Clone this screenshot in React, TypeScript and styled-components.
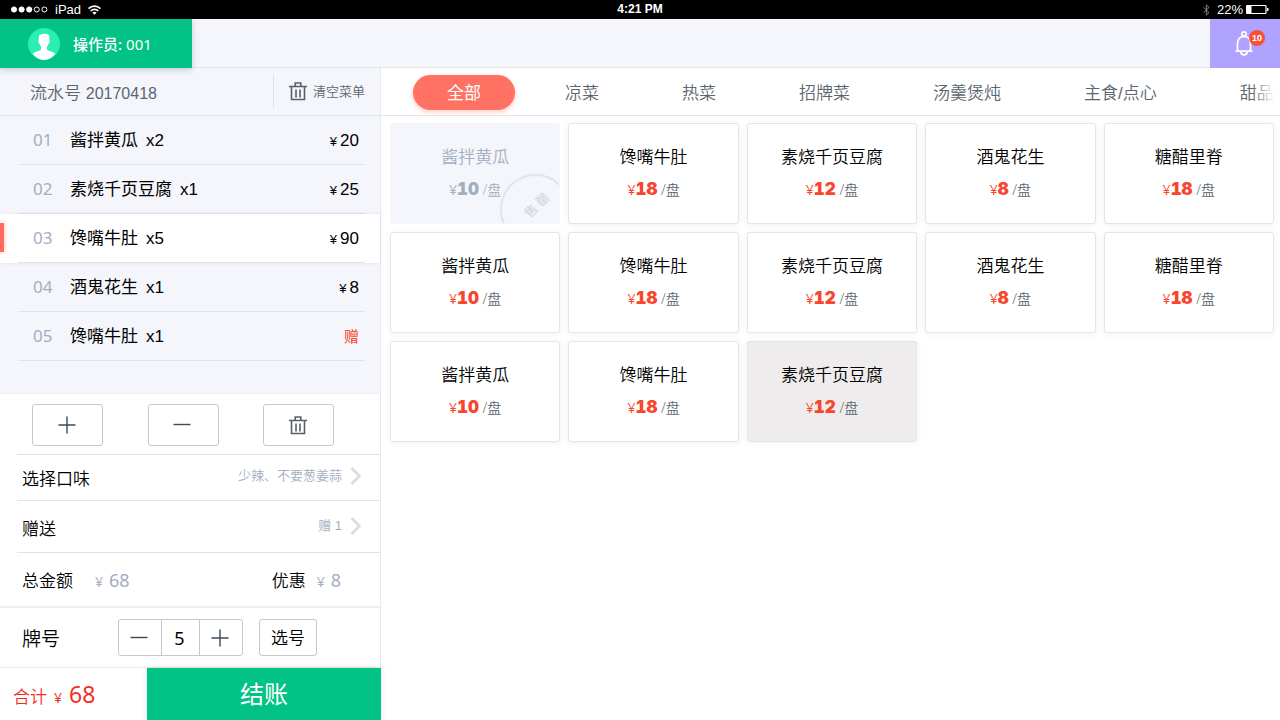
import React, { useState } from 'react';
import styled, { createGlobalStyle } from 'styled-components';

const GlobalStyle = createGlobalStyle`
  *, *::before, *::after { box-sizing: border-box; }
  body {
    margin: 0;
    background: #fff;
    color: #000;
    font-family: 'Liberation Sans', 'Noto Sans CJK SC', sans-serif;
    font-size: 17px;
    font-weight: 350;
    line-height: 24px;
  }
  button, input { font: inherit; color: inherit; }
  button { padding: 0; border: 0; background: none; cursor: pointer; }
  ul { margin: 0; padding: 0; list-style: none; }
`;

const Screen = styled.div`
  display: flex;
  flex-direction: column;
  min-height: 100vh;
`;

/* ---- status bar ---- */

const StatusBar = styled.div`
  display: grid;
  grid-template-columns: 1fr auto 1fr;
  align-items: center;
  height: 19px;
  padding: 0 11px;
  background: #000;
  color: #fff;
  font-size: 13px;
  font-weight: 400;
  line-height: 19px;
`;

const StatusGroup = styled.div<{ $end?: boolean }>`
  display: flex;
  align-items: center;
  gap: 7px;
  justify-content: ${(p) => (p.$end ? 'flex-end' : 'flex-start')};
`;

const Battery = styled.span`
  display: flex;
  align-items: center;
  gap: 3px;
`;

const Clock = styled.strong`
  font-size: 12px;
  font-weight: 700;
`;

/* ---- top bar ---- */

const TopBar = styled.header`
  display: flex;
  justify-content: space-between;
  height: 49px;
  background: #f4f6fb;
  border-bottom: 1px solid #e3e7ea;
`;

const Operator = styled.div`
  position: relative;
  display: flex;
  align-items: center;
  gap: 13px;
  width: 192px;
  height: 49px;
  padding-left: 28px;
  padding-top: 1px;
  background: #02c385;
  box-shadow: 0 2px 6px rgba(60, 70, 90, 0.25);
  color: #fff;
  font-family: 'Noto Sans', 'Noto Sans CJK SC', sans-serif;
  font-size: 15px;
  font-weight: 400;

  b { font-weight: 500; margin-right: 4px; }
`;

const Notice = styled.button`
  display: flex;
  align-items: center;
  justify-content: center;
  width: 70px;
  height: 49px;
  padding-right: 2px;
  background: #b0a2ff;
`;

const BellBox = styled.span`
  position: relative;
  display: flex;
`;

const Count = styled.span`
  position: absolute;
  top: -1px;
  right: -12px;
  width: 16px;
  height: 16px;
  border-radius: 8px;
  background: #f9503a;
  color: #fff;
  font-size: 9px;
  font-weight: 700;
  line-height: 16px;
  text-align: center;
`;

/* ---- body ---- */

const Body = styled.div`
  display: flex;
  flex: 1;
`;

const Order = styled.aside`
  display: flex;
  flex-direction: column;
  flex: none;
  width: 381px;
  border-right: 1px solid #e6e9ee;
`;

const OrderHead = styled.div`
  display: flex;
  align-items: center;
  justify-content: space-between;
  height: 48px;
  padding: 0 15px 0 30px;
  background: #f4f6fb;
  border-bottom: 1px solid #e1e5ea;
  color: #5b6670;
`;

const Serial = styled.span`
  padding-top: 4px;

  span { font-size: 16px; }
`;

const ClearButton = styled.button`
  display: flex;
  align-items: center;
  gap: 6px;
  height: 35px;
  padding-left: 15px;
  border-left: 1px solid #e1e5ea;
  font-size: 13px;
`;

const OrderList = styled.ul`
  flex: 1;
  padding-bottom: 32px;
  background: #f4f6fb;
  border-bottom: 1px solid #eceff4;
`;

const OrderRow = styled.li<{ $active?: boolean }>`
  position: relative;
  padding: 0 15px 0 18px;
  background: ${(p) => (p.$active ? '#fff' : 'transparent')};
  box-shadow: ${(p) => (p.$active ? '0 0 4px rgba(90, 100, 130, 0.12)' : 'none')};

  &::before {
    content: '';
    display: ${(p) => (p.$active ? 'block' : 'none')};
    position: absolute;
    left: 0;
    top: 9px;
    width: 4px;
    height: 29px;
    background: #ff6a5c;
    box-shadow: 0 0 5px rgba(255, 106, 92, 0.5);
  }
`;

const OrderLine = styled.div`
  display: flex;
  align-items: center;
  height: 49px;
  padding: 2px 6px 0 15px;
  border-bottom: 1px solid #e0e4ea;
  font-weight: 400;
`;

const Index = styled.span`
  width: 37px;
  padding-bottom: 2px;
  color: #a3aec0;
  font-family: 'Noto Sans', sans-serif;
`;

const Dish = styled.span`
  display: flex;
  flex: 1;
  gap: 8px;
`;

const Price = styled.span`
  display: flex;
  align-items: baseline;
  gap: 3px;

  small { font-size: 13px; }
`;

const Gift = styled.span`
  color: #f9452d;
  font-size: 15px;
`;

const Actions = styled.div`
  display: flex;
  justify-content: space-between;
  margin-left: 17px;
  padding: 10px 46px 8px 15px;
  border-bottom: 1px solid #dde4ec;
`;

const ActionButton = styled.button`
  display: flex;
  align-items: center;
  justify-content: center;
  width: 71px;
  height: 42px;
  padding-right: 2px;
  border: 1px solid #c6c8ca;
  border-radius: 3px;
`;

const OptionRow = styled.button<{ $tall?: boolean }>`
  display: flex;
  align-items: center;
  justify-content: space-between;
  height: ${(p) => (p.$tall ? '52px' : '46px')};
  margin-left: 17px;
  padding: ${(p) => (p.$tall ? '3px 19px 0 5px' : '0 19px 0 5px')};
  border-bottom: 1px solid #dde4ec;
`;

const OptionName = styled.span`
  padding-top: 4px;
`;

const OptionValue = styled.span`
  display: flex;
  align-items: center;
  gap: 8px;
  padding-bottom: 4px;
  color: #a3aec0;
  font-size: 13px;
`;

const Totals = styled.div`
  display: flex;
  align-items: center;
  justify-content: space-between;
  height: 55px;
  padding: 2px 39px 0 22px;
  border-bottom: 2px solid #eceff2;
`;

const Amount = styled.span<{ $wide?: boolean }>`
  display: flex;
  align-items: baseline;
  gap: ${(p) => (p.$wide ? '22px' : '11px')};
`;

const Figure = styled.span`
  color: #a3aec0;
  font-family: 'Noto Sans', sans-serif;
  font-size: 18px;
  font-weight: 400;

  small { margin-right: 6px; font-size: 14px; }
`;

const PlateRow = styled.div`
  display: flex;
  align-items: center;
  height: 60px;
  padding-left: 22px;
  border-bottom: 1px solid #e8ebee;
`;

const PlateLabel = styled.label`
  width: 96px;
  padding-top: 4px;
  font-size: 19px;
`;

const Stepper = styled.div`
  display: flex;
  height: 37px;
  margin-right: 16px;
  border: 1px solid #c6c8ca;
  border-radius: 3px;
`;

const StepButton = styled.button`
  display: flex;
  align-items: center;
  justify-content: center;
  width: 42px;
  padding-right: 2px;
`;

const StepInput = styled.input`
  width: 39px;
  padding: 0 2px 0 0;
  border: solid #c6c8ca;
  border-width: 0 1px;
  background: none;
  font-family: 'Noto Sans', sans-serif;
  font-size: 18px;
  font-weight: 400;
  text-align: center;
  outline: 0;
`;

const PickButton = styled.button`
  width: 58px;
  height: 37px;
  padding-top: 2px;
  border: 1px solid #c6c8ca;
  border-radius: 3px;
`;

const Footer = styled.div`
  display: flex;
  height: 53px;
`;

const Due = styled.div`
  flex: 1;
  padding: 14px 0 0 13px;
  color: #f0301f;

  small { margin: 0 7px; font-family: 'Noto Sans', sans-serif; font-size: 14px; font-weight: 400; }
  span { font-family: 'Noto Sans', sans-serif; font-size: 23px; font-weight: 400; }
`;

const Checkout = styled.button`
  width: 234px;
  margin-right: -1px;
  background: #02c385;
  box-shadow: 0 0 6px rgba(40, 60, 80, 0.15);
  color: #fff;
  font-size: 24px;
  font-weight: 400;
`;

/* ---- menu ---- */

const Menu = styled.main`
  flex: 1;
  min-width: 0;
`;

const Tabs = styled.nav`
  display: flex;
  align-items: center;
  gap: 17px;
  height: 48px;
  padding-top: 2px;
  padding-left: 32px;
  overflow: hidden;
  border-bottom: 1px solid #e1e5ea;
`;

const TabsFade = styled.div`
  position: relative;

  &::after {
    content: '';
    position: absolute;
    top: 0;
    right: 0;
    width: 28px;
    height: 46px;
    background: linear-gradient(to right, rgba(255, 255, 255, 0), #fff 80%);
    pointer-events: none;
  }
`;

const Tab = styled.button<{ $active?: boolean }>`
  flex: none;
  height: 35px;
  padding: ${(p) => (p.$active ? '2px 34px 0' : '2px 33px 0')};
  border-radius: 18px;
  background: ${(p) => (p.$active ? '#ff7263' : 'transparent')};
  box-shadow: ${(p) => (p.$active ? '0 2px 5px rgba(255, 114, 99, 0.4)' : 'none')};
  color: ${(p) => (p.$active ? '#fff' : '#5b6670')};
  font-weight: ${(p) => (p.$active ? 400 : 350)};
`;

const Grid = styled.div`
  display: grid;
  grid-template-columns: repeat(5, 1fr);
  gap: 8px;
  padding: 7px 6px 8px 9px;
`;

type CardState = 'normal' | 'pressed' | 'soldout';

const Card = styled.button<{ $state: CardState }>`
  position: relative;
  display: flex;
  flex-direction: column;
  align-items: center;
  justify-content: center;
  gap: 7px;
  height: 101px;
  padding-top: 1px;
  overflow: hidden;
  border: 1px solid ${(p) => (p.$state === 'soldout' ? '#f4f6fb' : '#e2e6ea')};
  border-radius: 3px;
  background: ${(p) =>
    p.$state === 'soldout' ? '#f4f6fb' : p.$state === 'pressed' ? '#eeecec' : '#fff'};
  box-shadow: ${(p) => (p.$state === 'soldout' ? 'none' : '0 1px 6px rgba(60, 60, 60, 0.07)')};
  color: ${(p) => (p.$state === 'soldout' ? '#a3aec0' : '#000')};
`;

const CardPrice = styled.span<{ $muted: boolean }>`
  color: ${(p) => (p.$muted ? '#a3aec0' : '#f9452d')};
  font-family: 'Open Sans', 'Noto Sans CJK SC', sans-serif;
  font-size: 14px;

  small { font-size: 14px; font-weight: 400; }
  b {
    font-family: Inter, sans-serif;
    font-size: 17px;
    font-weight: 900;
    font-variant-numeric: tabular-nums;
  }
  span { color: ${(p) => (p.$muted ? '#a3aec0' : '#5b6670')}; }
`;

const Stamp = styled.span`
  position: absolute;
  right: -12px;
  bottom: -22px;
  display: flex;
  align-items: center;
  justify-content: center;
  gap: 3px;
  width: 71px;
  height: 71px;
  padding: 0 0 4px 8px;
  border: 2px solid #e0e4e9;
  border-radius: 50%;
  color: #cdd3db;
  font-size: 13px;
  line-height: 16px;
  transform: rotate(-45deg);
`;

/* ---- icons ---- */

const Trash = () => (
  <svg width="18" height="19" viewBox="0 0 18 19" fill="none" stroke="#56616c" strokeWidth="1.6">
    <path d="M0 4.5h18M6.200 4V1h5.600v3M2.500 4.5v13h13v-13M7 7.500v8M11 7.500v8" />
  </svg>
);

const Plus = () => (
  <svg width="18" height="18" viewBox="0 0 18 18" stroke="#3c4a58" strokeWidth="1.4">
    <path d="M0.5 9h17M9 0.5v17" />
  </svg>
);

const Minus = () => (
  <svg width="18" height="18" viewBox="0 0 18 18" stroke="#3c4a58" strokeWidth="1.4">
    <path d="M0.5 8.5h17" />
  </svg>
);

const Chevron = () => (
  <svg width="11" height="18" viewBox="0 0 11 18" fill="none" stroke="#d9dbde" strokeWidth="2.6">
    <path d="M1.5 1l8 8-8 8" />
  </svg>
);

const Avatar = () => (
  <svg width="32" height="32" viewBox="0 0 32 32">
    <circle cx="16" cy="16" r="16" fill="#2aeeb2" />
    <path
      d="M10.900 8C11.200 6.600 12.400 6.300 13 6.400c1.200-.9 6.200-1 7.500.3 1.100.9 1.200 3 .8 5.500.8.2.6 1.800-.6 3.200-.4 1.400-.9 2.200-1.700 3v3c1 1.600 6 1.900 8.300 4.300A16 16 0 0 1 16 32a16 16 0 0 1-11.300-6.300c2.300-2.400 7.300-2.700 8.300-4.300v-3c-.8-.8-1.300-1.700-1.600-3-1.200-1.400-1.400-3-.6-3.200-.3-1.600-.2-3 .1-4.200z"
      fill="#fff"
    />
  </svg>
);

const Bell = () => (
  <svg width="18" height="25" viewBox="0 0 18 25" fill="none" stroke="#fff" strokeWidth="1.7">
    <circle cx="9" cy="3" r="2.100" />
    <path d="M0.500 20.200h17M2.500 20v-7.500C2.500 8 5 5.500 9 5.500s6.500 2.500 6.500 7V20M5.500 20.500c.4 2.300 1.700 3.300 3.500 3.300s3.100-1 3.500-3.300" />
  </svg>
);

const Signal = () => (
  <svg width="37" height="7" viewBox="0 0 37 7" fill="#fff" stroke="#fff">
    {[3, 10.6, 18.2].map((x) => (
      <circle key={x} cx={x} cy="3.500" r="2.600" />
    ))}
    {[25.800, 33.400].map((x) => (
      <circle key={x} cx={x} cy="3.500" r="2.500" fill="none" />
    ))}
  </svg>
);

const Wifi = () => (
  <svg width="13" height="10" viewBox="0 0 13 10" fill="none" stroke="#fff" strokeWidth="1.700">
    <path d="M0.600 3.600a8.400 8.400 0 0 1 11.800 0M2.700 6a5.400 5.400 0 0 1 7.600 0" />
    <path d="M6.500 9.800L4.400 7.700a3 3 0 0 1 4.200 0z" fill="#fff" stroke="none" />
  </svg>
);

const Bluetooth = () => (
  <svg width="7" height="12" viewBox="0 0 7 12" fill="none" stroke="#808080">
    <path d="M0.500 3.200l5.500 5.400-2.600 2.500V0.900L6 3.400 0.500 8.800" />
  </svg>
);

const BatteryIcon = () => (
  <svg width="23" height="9" viewBox="0 0 23 9" fill="none" stroke="#fff">
    <rect x="0.500" y="0.500" width="19.500" height="8" rx="1" strokeWidth="1.200" />
    <path d="M1 1h4.500v7H1z" fill="#fff" stroke="none" />
    <path d="M21 3h1.500v3H21z" fill="#fff" stroke="none" />
  </svg>
);

/* ---- data ---- */

const orderItems = [
  { name: '酱拌黄瓜', qty: 2, price: 20 },
  { name: '素烧千页豆腐', qty: 1, price: 25 },
  { name: '馋嘴牛肚', qty: 5, price: 90, active: true },
  { name: '酒鬼花生', qty: 1, price: 8 },
  { name: '馋嘴牛肚', qty: 1, price: null },
];

const tabs = ['全部', '凉菜', '热菜', '招牌菜', '汤羹煲炖', '主食/点心', '甜品'];

const dishes: { name: string; price: number }[] = [
  { name: '酱拌黄瓜', price: 10 },
  { name: '馋嘴牛肚', price: 18 },
  { name: '素烧千页豆腐', price: 12 },
  { name: '酒鬼花生', price: 8 },
  { name: '糖醋里脊', price: 18 },
];

const cards = [...dishes, ...dishes, ...dishes.slice(0, 3)].map((dish, i) => ({
  ...dish,
  state: (i === 0 ? 'soldout' : i === 12 ? 'pressed' : 'normal') as CardState,
}));

export default function App() {
  const [tab, setTab] = useState(0);
  const [plate, setPlate] = useState(5);

  return (
    <Screen>
      <GlobalStyle />
      <StatusBar>
        <StatusGroup>
          <Signal />
          iPad
          <Wifi />
        </StatusGroup>
        <Clock>4:21 PM</Clock>
        <StatusGroup $end>
          <Bluetooth />
          <Battery>
            22%
            <BatteryIcon />
          </Battery>
        </StatusGroup>
      </StatusBar>

      <TopBar>
        <Operator>
          <Avatar />
          <span>
            <b>操作员:</b>001
          </span>
        </Operator>
        <Notice aria-label="通知">
          <BellBox>
            <Bell />
            <Count>10</Count>
          </BellBox>
        </Notice>
      </TopBar>

      <Body>
        <Order>
          <OrderHead>
            <Serial>
              流水号 <span>20170418</span>
            </Serial>
            <ClearButton>
              <Trash />
              清空菜单
            </ClearButton>
          </OrderHead>

          <OrderList>
            {orderItems.map((item, i) => (
              <OrderRow key={i} $active={item.active}>
                <OrderLine>
                  <Index>0{i + 1}</Index>
                  <Dish>
                    <span>{item.name}</span>
                    <span>x{item.qty}</span>
                  </Dish>
                  {item.price === null ? (
                    <Gift>赠</Gift>
                  ) : (
                    <Price>
                      <small>¥</small>
                      {item.price}
                    </Price>
                  )}
                </OrderLine>
              </OrderRow>
            ))}
          </OrderList>

          <Actions>
            <ActionButton aria-label="增加">
              <Plus />
            </ActionButton>
            <ActionButton aria-label="减少">
              <Minus />
            </ActionButton>
            <ActionButton aria-label="删除">
              <Trash />
            </ActionButton>
          </Actions>

          <OptionRow>
            <OptionName>选择口味</OptionName>
            <OptionValue>
              少辣、不要葱姜蒜
              <Chevron />
            </OptionValue>
          </OptionRow>
          <OptionRow $tall>
            <OptionName>赠送</OptionName>
            <OptionValue>
              赠 1
              <Chevron />
            </OptionValue>
          </OptionRow>

          <Totals>
            <Amount $wide>
              总金额
              <Figure>
                <small>¥</small>68
              </Figure>
            </Amount>
            <Amount>
              优惠
              <Figure>
                <small>¥</small>8
              </Figure>
            </Amount>
          </Totals>

          <PlateRow>
            <PlateLabel htmlFor="plate">牌号</PlateLabel>
            <Stepper>
              <StepButton aria-label="减一" onClick={() => setPlate(plate - 1)}>
                <Minus />
              </StepButton>
              <StepInput
                id="plate"
                value={plate}
                onChange={(e) => setPlate(Number(e.target.value) || 0)}
              />
              <StepButton aria-label="加一" onClick={() => setPlate(plate + 1)}>
                <Plus />
              </StepButton>
            </Stepper>
            <PickButton>选号</PickButton>
          </PlateRow>

          <Footer>
            <Due>
              合计<small>¥</small>
              <span>68</span>
            </Due>
            <Checkout>结账</Checkout>
          </Footer>
        </Order>

        <Menu>
          <TabsFade>
            <Tabs>
              {tabs.map((label, i) => (
                <Tab key={label} $active={i === tab} onClick={() => setTab(i)}>
                  {label}
                </Tab>
              ))}
            </Tabs>
          </TabsFade>
          <Grid>
            {cards.map((card, i) => (
              <Card key={i} $state={card.state} disabled={card.state === 'soldout'}>
                <span>{card.name}</span>
                <CardPrice $muted={card.state === 'soldout'}>
                  <small>¥</small>
                  <b>{card.price}</b> <span>/盘</span>
                </CardPrice>
                {card.state === 'soldout' && (
                  <Stamp>
                    <span>售</span>
                    <span>罄</span>
                  </Stamp>
                )}
              </Card>
            ))}
          </Grid>
        </Menu>
      </Body>
    </Screen>
  );
}
